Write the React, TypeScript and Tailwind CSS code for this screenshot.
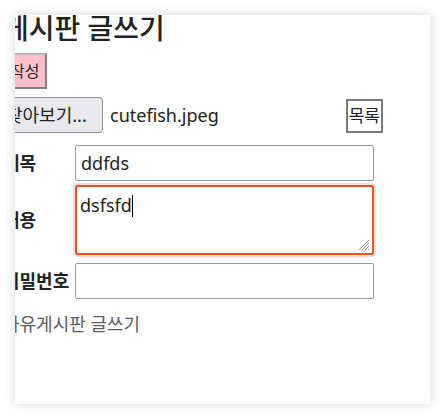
import React from "react";

export default function App() {
  return (
    <div className="w-[446px] h-[420px] bg-white pt-[15px] pl-[15px] font-['Noto_Sans','Noto_Sans_CJK_KR',sans-serif] text-[#222]">
      <div className="w-[415px] h-[389px] bg-white overflow-hidden shadow-[0_0_10px_rgba(0,0,0,0.16)]">
        <div className="ml-[-12px] mt-[-4px] w-[440px]">
          <h2 className="text-[28px] leading-[34px] font-medium whitespace-nowrap">게시판 글쓰기</h2>

          <div className="mt-[8px] flex">
            <button className="bg-[#ffc0cb] border-2 border-[#b8b8b8] border-r-[#808080] border-b-[#808080] pl-[5px] pr-[6px] py-[7px] text-[16px] leading-[18px]">
              작성
            </button>
          </div>

          <div className="mt-[8px] flex items-end w-[380px]">
            <div className="flex items-center">
              <button className="ml-[-6px] w-[106px] h-[36px] flex items-center pl-[8px] bg-[#e9e9ed] border border-[#8f8f9d] rounded-[4px] text-[18px] leading-[22px] whitespace-nowrap">
                찾아보기...
              </button>
              <span className="ml-[7px] text-[18px] leading-[24px]">cutefish.jpeg</span>
            </div>
            <button className="ml-auto bg-white border-2 border-[#7a7a7a] px-[1px] py-[5px] text-[17px] leading-[20px]">
              목록
            </button>
          </div>

          <div className="mt-[12px] flex flex-col">
            <div className="flex items-center">
              <div className="w-[72px] font-bold text-[18px] leading-[22px]">제목</div>
              <div className="w-[299px] h-[36px] border border-[#9a9aa6] rounded-[2px] bg-white flex items-center pl-[5px] text-[18px] leading-[24px]">
                ddfds
              </div>
            </div>
            <div className="mt-[4px] flex items-center">
              <div className="w-[72px] font-bold text-[18px] leading-[22px]">내용</div>
              <div className="relative w-[299px] h-[70px] border-2 border-[#e95420] rounded-[3px] bg-white shadow-[0_0_0_2px_rgba(233,84,32,0.22)] pl-[3px] pt-[6px] text-[18px] leading-[24px]">
                <span>dsfsfd</span>
                <span className="inline-block w-[1px] h-[22px] bg-black align-[-5px]" />
                <svg className="absolute right-[2px] bottom-[2px]" width="12" height="12" viewBox="0 0 12 12">
                  <line x1="11" y1="1" x2="1" y2="11" stroke="#9a9a9a" strokeWidth="1" />
                  <line x1="11" y1="4" x2="4" y2="11" stroke="#9a9a9a" strokeWidth="1" />
                  <line x1="11" y1="7" x2="7" y2="11" stroke="#9a9a9a" strokeWidth="1" />
                  <line x1="11" y1="10" x2="10" y2="11" stroke="#9a9a9a" strokeWidth="1" />
                </svg>
              </div>
            </div>
            <div className="mt-[8px] flex items-center">
              <div className="w-[72px] font-bold text-[18px] leading-[22px] whitespace-nowrap">비밀번호</div>
              <div className="w-[299px] h-[36px] border border-[#9a9aa6] rounded-[2px] bg-white" />
            </div>
          </div>

          <div className="mt-[13px] text-[18px] leading-[24px] text-[#5c5c5c] whitespace-nowrap">자유게시판 글쓰기</div>
        </div>
      </div>
    </div>
  );
}
